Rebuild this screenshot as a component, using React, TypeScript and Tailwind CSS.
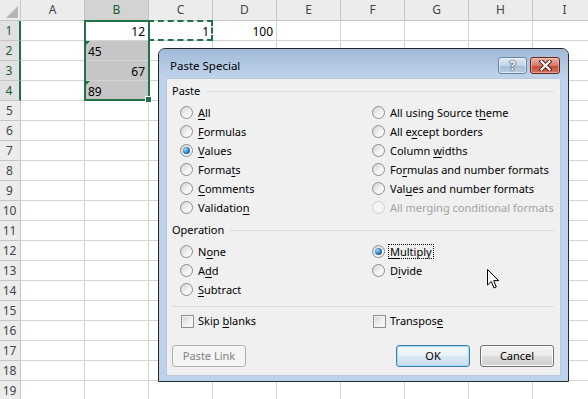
import React from 'react'

const COLS = ['A', 'B', 'C', 'D', 'E', 'F', 'G', 'H', 'I']
const ROWS = Array.from({ length: 19 }, (_, i) => i + 1)

// cell contents keyed by "col:row"
const CELLS: Record<string, { v: string; align: 'left' | 'right'; tri?: boolean }> = {
  'B:1': { v: '12', align: 'right' },
  'C:1': { v: '1', align: 'right' },
  'D:1': { v: '100', align: 'right' },
  'B:2': { v: '45', align: 'left', tri: true },
  'B:3': { v: '67', align: 'right' },
  'B:4': { v: '89', align: 'left', tri: true },
}

function Acc({ t, u }: { t: string; u?: number }) {
  if (u === undefined) return <>{t}</>
  return (
    <>
      {t.slice(0, u)}
      <span className="underline underline-offset-2">{t[u]}</span>
      {t.slice(u + 1)}
    </>
  )
}

function Radio({ checked, disabled }: { checked?: boolean; disabled?: boolean }) {
  return (
    <span
      className={`flex h-[13px] w-[13px] shrink-0 items-center justify-center rounded-full border ${
        disabled
          ? 'border-[#cfcfcf] bg-[#f3f3f3]'
          : 'border-[#8c8c8c] bg-[linear-gradient(135deg,#d2d2d2,#f4f4f4_60%,#ffffff)]'
      }`}
    >
      {checked && (
        <span className="h-[7px] w-[7px] rounded-full bg-[radial-gradient(circle_at_35%_35%,#a8dcf8,#2b7fc4_50%,#0c3d74)]" />
      )}
    </span>
  )
}

function Check() {
  return (
    <span className="h-[13px] w-[13px] shrink-0 border border-[#8e8f8f] bg-[linear-gradient(135deg,#cfcfcf,#f0f0f0_55%,#ffffff)] shadow-[inset_0_0_0_1px_#f4f4f4]" />
  )
}

function Opt({
  t,
  u,
  checked,
  disabled,
  focus,
}: {
  t: string
  u?: number
  checked?: boolean
  disabled?: boolean
  focus?: boolean
}) {
  return (
    <div className="flex h-[19px] items-center gap-[5px]">
      <Radio checked={checked} disabled={disabled} />
      <span
        className={`leading-[13px] ${disabled ? 'text-[#a3a3a3]' : 'text-black'} ${
          focus ? '-ml-[2px] border border-dotted border-black px-[1px] py-[0px]' : ''
        }`}
      >
        <Acc t={t} u={u} />
      </span>
    </div>
  )
}

function GroupHead({ label }: { label: string }) {
  return (
    <div className="flex h-[24px] items-center gap-[6px]">
      <span>{label}</span>
      <span className="h-0 flex-1 border-t border-[#d5dee4]" />
    </div>
  )
}

function Sheet() {
  return (
    <div className="grid grid-cols-[21px_repeat(9,64px)] grid-rows-[21px_repeat(19,20px)] font-['Noto_Sans',sans-serif] text-[12px] text-black">
      {/* corner */}
      <div className="relative border-r border-b border-[#c6c6c6] bg-[#ececec]">
        <span className="absolute right-[2px] bottom-[2px] h-0 w-0 border-b-[12px] border-l-[12px] border-b-[#b5b5b5] border-l-transparent" />
      </div>
      {COLS.map((c) => (
        <div
          key={c}
          className={`flex items-center justify-center border-r border-b border-[#c6c6c6] text-[12px] ${
            c === 'B' ? 'bg-[#d3d3d3] text-[#1d5a36]' : 'bg-[#ececec] text-[#444]'
          }`}
        >
          {c}
        </div>
      ))}
      {ROWS.map((r) => (
        <React.Fragment key={r}>
          <div
            className={`flex items-center justify-center pr-[1px] border-b border-[#c6c6c6] ${
              r <= 4
                ? 'border-r-2 border-r-[#217346] bg-[#e1e1e1] text-[#1d5a36]'
                : 'border-r border-r-[#c6c6c6] bg-[#ececec] text-[#444]'
            }`}
          >
            {r}
          </div>
          {COLS.map((c) => {
            const cell = CELLS[`${c}:${r}`]
            const sel = c === 'B' && r >= 2 && r <= 4
            return (
              <div
                key={c}
                className={`relative flex items-end border-r border-b border-[#d4d4d4] px-[3px] leading-[16px] ${
                  sel ? 'bg-[#c6c6c6]' : 'bg-white'
                } ${cell?.align === 'right' ? 'justify-end' : 'justify-start'}`}
              >
                {cell?.tri && (
                  <span className="absolute top-0 left-0 h-0 w-0 border-t-[5px] border-r-[5px] border-t-[#1e7145] border-r-transparent" />
                )}
                {cell?.v}
              </div>
            )
          })}
        </React.Fragment>
      ))}
    </div>
  )
}

function Dialog() {
  return (
    <div className="absolute top-[48px] left-[158px] flex h-[334px] w-[411px] flex-col rounded-t-[7px] border border-[#262626] bg-[#bcd2ea] font-['Noto_Sans',sans-serif] text-[11px] text-black">
      {/* title bar */}
      <div className="flex h-[29px] items-start justify-between rounded-t-[6px] bg-[linear-gradient(#a0bad8,#b4cae4_60%,#bfd3ea)] pr-[8px] pl-[11px]">
        <span className="pt-[10px] text-[11.5px] leading-[14px]">Paste Special</span>
        <div className="flex gap-[3px] pt-[8px]">
          <div className="flex h-[17px] w-[29px] items-center justify-center rounded-[3px] border border-[#6a84a6] bg-[linear-gradient(#dfe8f2,#c4d4e6_50%,#a8bdd6_51%,#b9cde2)] shadow-[inset_0_0_0_1px_rgba(255,255,255,0.5)]">
            <span className="text-[12px] leading-none font-bold text-white [text-shadow:0_0_1px_#2b3f5c,0_0_1px_#2b3f5c,0_0_2px_#2b3f5c]">
              ?
            </span>
          </div>
          <div className="flex h-[17px] w-[30px] items-center justify-center rounded-[3px] border border-[#6b2318] bg-[linear-gradient(#eab1a4,#d7796a_50%,#c24a37_51%,#d3735f)] shadow-[inset_0_0_0_1px_rgba(255,220,210,0.45)]">
            <svg width="13" height="11" viewBox="0 0 13 11">
              <path d="M2.5 1.5 L10.5 9.5 M10.5 1.5 L2.5 9.5" stroke="#4a1a12" strokeWidth="4" strokeLinecap="square" />
              <path d="M2.5 1.5 L10.5 9.5 M10.5 1.5 L2.5 9.5" stroke="#ffffff" strokeWidth="2.2" strokeLinecap="square" />
            </svg>
          </div>
        </div>
      </div>

      {/* client area */}
      <div className="mx-[7px] mb-[5px] flex flex-1 flex-col border border-[#b9c9db] bg-[#f0f0f0] pr-[6px] pl-[5px]">
        <GroupHead label="Paste" />
        <div className="ml-[8px] grid grid-cols-[192px_1fr]">
          <Opt t="All" u={0} />
          <Opt t="All using Source theme" u={18} />
          <Opt t="Formulas" u={0} />
          <Opt t="All except borders" u={5} />
          <Opt t="Values" u={0} checked />
          <Opt t="Column widths" u={7} />
          <Opt t="Formats" u={5} />
          <Opt t="Formulas and number formats" u={2} />
          <Opt t="Comments" u={0} />
          <Opt t="Values and number formats" u={3} />
          <Opt t="Validation" u={9} />
          <Opt t="All merging conditional formats" disabled />
        </div>

        <div className="mt-px">
          <GroupHead label="Operation" />
        </div>
        <div className="relative ml-[8px] grid grid-cols-[192px_1fr]">
          <Opt t="None" u={1} />
          <Opt t="Multiply" u={0} checked focus />
          <Opt t="Add" u={1} />
          <Opt t="Divide" u={1} />
          <Opt t="Subtract" u={0} />
          <div />
          {/* mouse pointer */}
          <svg
            className="absolute top-[27px] left-[307px]"
            width="13"
            height="21"
            viewBox="0 0 13 21"
          >
            <path
              d="M0.5 0.5 L0.5 16 L4.3 12.4 L7 19 L9.3 18 L6.7 11.6 L11.6 11.6 Z"
              fill="#ffffff"
              stroke="#000000"
              strokeWidth="1"
              strokeLinejoin="round"
            />
          </svg>
        </div>

        <div className="mt-[7px] border-t border-[#d5dee4]" />

        <div className="mt-[4px] ml-[9px] grid h-[20px] grid-cols-[192px_1fr] items-center">
          <div className="flex items-center gap-[4px]">
            <Check />
            <span>
              <Acc t="Skip blanks" u={5} />
            </span>
          </div>
          <div className="flex items-center gap-[4px]">
            <Check />
            <span>
              <Acc t="Transpose" u={8} />
            </span>
          </div>
        </div>

        <div className="mt-[14px] flex items-center justify-between">
          <div className="flex h-[22px] w-[74px] items-center justify-center rounded-[3px] border border-[#adb2b5] bg-[#f4f4f4] text-[#838383]">
            Paste Link
          </div>
          <div className="flex gap-[10px]">
            <div className="flex h-[22px] w-[74px] items-center justify-center rounded-[3px] border border-[#3c7fb1] bg-[linear-gradient(#f3f8fb,#e9f2f8_50%,#d8e8f3_51%,#c9dfee)] shadow-[inset_0_0_0_1px_#9fdcf6]">
              OK
            </div>
            <div className="flex h-[22px] w-[74px] items-center justify-center rounded-[3px] border border-[#707070] bg-[linear-gradient(#f2f2f2,#ebebeb_50%,#dddddd_51%,#cfcfcf)] shadow-[inset_0_0_0_1px_#fcfcfc]">
              Cancel
            </div>
          </div>
        </div>
      </div>
    </div>
  )
}

export default function App() {
  return (
    <div className="relative h-[399px] w-[588px] overflow-hidden bg-white">
      <Sheet />
      {/* copy marquee on C1 */}
      <div className="absolute top-[20px] left-[148px] h-[21px] w-[65px] border-2 border-dashed border-[#217346]" />
      {/* selection B1:B4 */}
      <div className="absolute top-[20px] left-[84px] h-[81px] w-[66px] border-2 border-[#217346]" />
      <div className="absolute top-[96px] left-[145px] h-[7px] w-[7px] border border-white bg-[#217346]" />
      <Dialog />
    </div>
  )
}
